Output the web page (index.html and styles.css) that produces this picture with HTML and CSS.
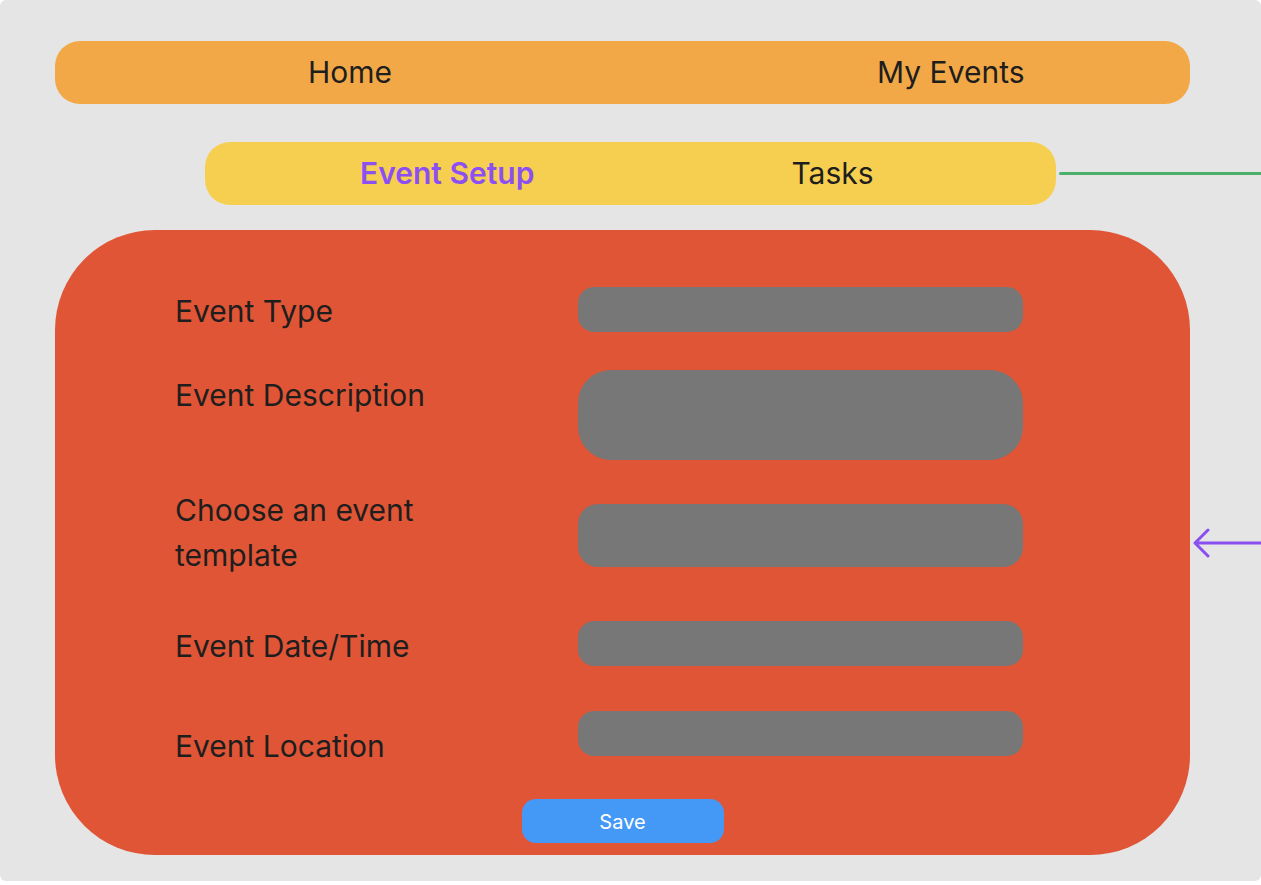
FILE: index.html
```html
<!DOCTYPE html>
<html lang="en">
<head>
<meta charset="utf-8">
<title>Event Setup</title>
<link rel="stylesheet" href="styles.css">
</head>
<body>
<div class="frame">
  <nav class="main-nav">
    <span class="nav-item nav-home">Home</span>
    <span class="nav-item">My Events</span>
  </nav>
  <div class="sub-row">
    <nav class="sub-nav">
      <span class="sub-item sub-active">Event Setup</span>
      <span class="sub-item">Tasks</span>
    </nav>
    <div class="connector"></div>
  </div>
  <div class="card-row">
    <form class="card">
      <div class="row row-1">
        <label class="label lbl-1">Event Type</label>
        <div class="field field-sm"></div>
      </div>
      <div class="row row-2">
        <label class="label lbl-2">Event Description</label>
        <div class="field field-lg"></div>
      </div>
      <div class="row row-3">
        <label class="label lbl-3">Choose an event<br>template</label>
        <div class="field field-md"></div>
      </div>
      <div class="row row-4">
        <label class="label lbl-4">Event Date/Time</label>
        <div class="field field-sm"></div>
      </div>
      <div class="row row-5">
        <label class="label lbl-5">Event Location</label>
        <div class="field field-sm"></div>
      </div>
      <button type="button" class="save">Save</button>
    </form>
    <svg class="arrow" width="69" height="32" viewBox="0 0 69 32" aria-hidden="true">
      <path d="M69 16 H3 M16 3 L3 16 L16 29" fill="none" stroke="#8a4ff0" stroke-width="3" stroke-linecap="round" stroke-linejoin="round"/>
    </svg>
  </div>
</div>
</body>
</html>
```

FILE: styles.css
```css
html, body {
  margin: 0;
  padding: 0;
  background: #ffffff;
}

body {
  font-family: Inter, "Noto Sans", "Liberation Sans", sans-serif;
  color: #1e1e1e;
}

.frame {
  width: 1261px;
  height: 881px;
  background: #e5e5e5;
  border-radius: 6px;
  padding-top: 41px;
  box-sizing: border-box;
  overflow: hidden;
}

.main-nav {
  margin-left: 55px;
  width: 1135px;
  height: 63px;
  background: #f2a846;
  border-radius: 25px;
  display: flex;
  align-items: center;
  padding-left: 253px;
  gap: 485px;
  box-sizing: border-box;
}

.nav-item {
  font-size: 30px;
  line-height: 61px;
  white-space: nowrap;
}

.sub-row {
  margin-top: 38px;
  margin-left: 205px;
  display: flex;
  align-items: center;
  gap: 3px;
}

.sub-nav {
  width: 851px;
  height: 63px;
  flex: none;
  background: #f7cf50;
  border-radius: 25px;
  display: flex;
  align-items: center;
  padding-left: 155px;
  gap: 257px;
  box-sizing: border-box;
}

.sub-item {
  font-size: 30px;
  line-height: 63px;
  white-space: nowrap;
}

.sub-active {
  color: #8c4ff2;
  font-weight: 600;
}

.connector {
  flex: 1;
  height: 3px;
  background: #4caf6a;
  border-radius: 2px 0 0 2px;
}

.card-row {
  margin-top: 25px;
  margin-left: 55px;
  display: flex;
  align-items: center;
  gap: 2px;
}

.card {
  width: 1135px;
  height: 625px;
  flex: none;
  background: #e05535;
  border-radius: 100px;
  box-sizing: border-box;
  padding: 57px 0 0 120px;
  display: flex;
  flex-direction: column;
  margin: 0;
}

.arrow {
  display: block;
  flex: none;
}

.row {
  display: grid;
  grid-template-columns: 403px 445px;
  align-items: start;
}

.label {
  font-size: 30px;
  line-height: 45px;
  white-space: nowrap;
}

.field {
  background: #777777;
}

.field-sm {
  height: 45px;
  border-radius: 16px;
}

.field-lg {
  height: 90px;
  border-radius: 33px;
}

.field-md {
  height: 63px;
  border-radius: 20px;
  margin-top: 16px;
}

.row-2 { margin-top: 36px; }
.row-3 { margin-top: 28px; }
.row-4 { margin-top: 43px; }
.row-5 { margin-top: 42px; }

.lbl-1 { margin-top: 2px; }
.lbl-2 { margin-top: 3px; }
.lbl-3 { margin-top: 0; }
.lbl-4 { margin-top: 3px; }
.lbl-5 { margin-top: 13px; }

.save {
  align-self: center;
  margin-top: 30px;
  margin-left: -120px;
  width: 202px;
  height: 44px;
  border: none;
  border-radius: 14px;
  background: #4499f7;
  color: #ffffff;
  font-family: Inter, "Noto Sans", "Liberation Sans", sans-serif;
  font-size: 20px;
  line-height: 46px;
  padding: 0;
}
```
